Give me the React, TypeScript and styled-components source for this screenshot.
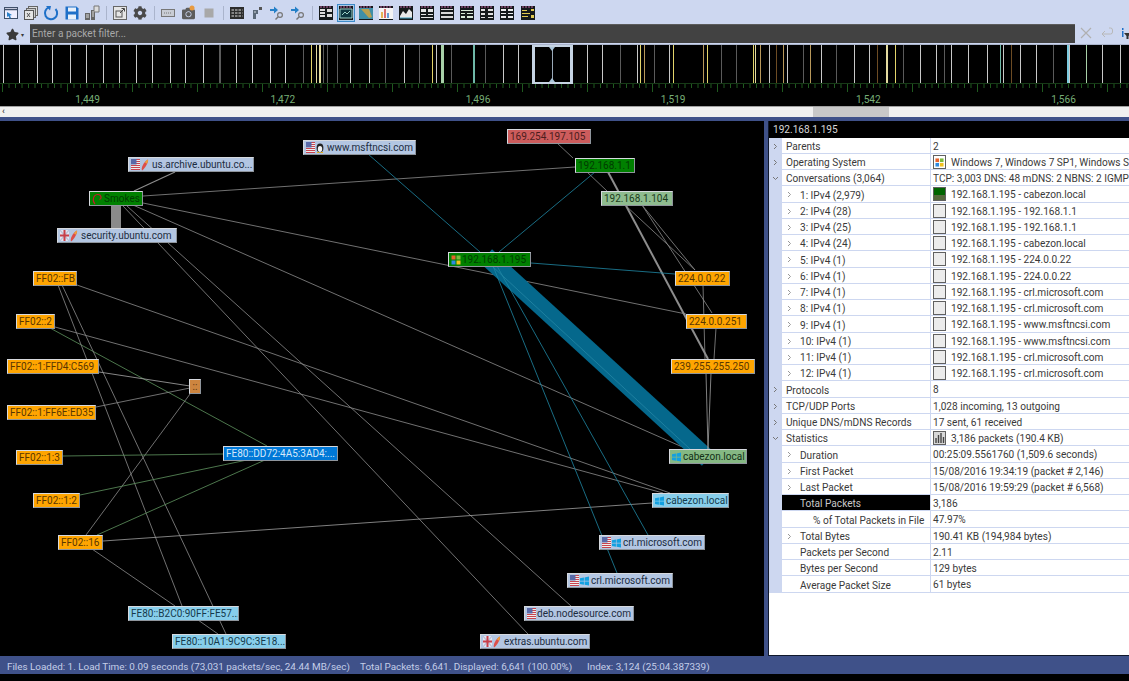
import React, {FC, ReactNode} from 'react';
import styled, {createGlobalStyle} from 'styled-components';
import {FaCog, FaCamera, FaStar} from 'react-icons/fa';

const GlobalStyle = createGlobalStyle`
	html, body {
		margin: 0;
		padding: 0;
		background: #000;
		overflow: hidden;
	}
	* {
		box-sizing: border-box;
	}
`;

const FONT = `Roboto, "Open Sans", "Liberation Sans", sans-serif`;
const TEXT_SIZE = '10.1px';

const Page = styled.div`
	width: 1129px;
	height: 681px;
	display: flex;
	flex-direction: column;
	background: #000;
	font-family: ${FONT};
	overflow: hidden;
`;

const Toolbar = styled.div`
	height: 24px;
	flex: none;
	display: flex;
	align-items: center;
	padding: 2px 0 0 1px;
	background: #cdd7f0;
`;

const ToolSlot = styled.div<{$active?: boolean}>`
	width: 20.2px;
	height: 20px;
	flex: none;
	display: flex;
	align-items: center;
	justify-content: center;
	color: #555;

	${({$active}) => $active && `
		& > svg {
			outline: 1px solid #3d8bc9;
			background: #a9cbe8;
		}
	`}
`;

const ToolSeparator = styled.div`
	width: 8px;
	height: 14px;
	flex: none;

	&::after {
		content: '';
		display: block;
		width: 1px;
		height: 100%;
		margin-left: 4px;
		background: #aab4cc;
	}
`;

const FilterBar = styled.div`
	height: 20px;
	flex: none;
	display: flex;
	align-items: center;
	background: #cdd7f0;
	color: #333;
`;

const StarButton = styled.div`
	width: 30px;
	height: 20px;
	flex: none;
	display: flex;
	align-items: center;
	justify-content: center;
	gap: 2px;
	padding-right: 1px;
	color: #3a3a3a;
	font-size: 6px;
`;

const FilterInput = styled.div`
	width: 1045px;
	height: 19px;
	flex: none;
	align-self: flex-start;
	padding: 0 2px 2px;
	display: flex;
	align-items: center;
	background: #424242;
	border-top: 1px solid #5b5b5b;
	color: #a8a8a8;
	font-size: ${TEXT_SIZE};
`;

const FilterActions = styled.div`
	flex: 1;
	display: flex;
	align-items: center;
	gap: 8px;
	padding: 0 0 2px 5px;
	overflow: hidden;
`;

const Timeline = styled.div`
	height: 62px;
	flex: none;
	position: relative;
	background: #000;
	border-top: 1px solid #aab4cc;
	display: flex;
	flex-direction: column;
`;

const TickStrip = styled.svg`
	display: block;
	width: 1129px;
	height: 48px;
	flex: none;
`;

const RulerLabels = styled.div`
	display: flex;
	margin-left: -10px;
	height: 13px;
`;

const RulerLabel = styled.div`
	width: 195.2px;
	flex: none;
	text-align: center;
	color: #76ad76;
	font-size: ${TEXT_SIZE};
	line-height: 13px;
`;

const Selection = styled.div`
	position: absolute;
	left: 532px;
	top: 0;
	width: 41px;
	height: 39px;
	border: 2px solid #c5d3e2;
	border-left-width: 3px;
	border-right-width: 3px;

	&::before {
		content: '';
		position: absolute;
		left: 17px;
		top: 0;
		bottom: 0;
		width: 1px;
		background: #9aa9b8;
	}
`;

const Handle = styled.div<{$bottom?: boolean}>`
	position: absolute;
	left: 14px;
	${({$bottom}) => $bottom ? 'bottom: 0;' : 'top: 0;'}
	width: 0;
	height: 0;
	border-left: 3.5px solid transparent;
	border-right: 3.5px solid transparent;
	${({$bottom}) => $bottom ? 'border-bottom: 4px solid #a9c4d8;' : 'border-top: 4px solid #a9c4d8;'}
`;

const ScrollTrack = styled.div`
	height: 11px;
	flex: none;
	position: relative;
	background: #f0f0f0;
	border-top: 1px solid #a0a0a0;
	color: #444;
	font-size: 9px;
	line-height: 9px;
	padding-left: 2px;
	font-weight: 700;
`;

const ScrollThumb = styled.div`
	position: absolute;
	left: 813px;
	top: 0;
	bottom: 0;
	width: 76px;
	background: #c8c8c8;
`;

const Main = styled.div`
	height: 539px;
	flex: none;
	display: flex;
	border-top: 4px solid #3f5189;
	background: #3f5189;
`;

const GraphCanvas = styled.div`
	width: 764px;
	flex: none;
	position: relative;
	background: #000;
	overflow: hidden;
`;

const EdgeLayer = styled.svg`
	position: absolute;
	left: 0;
	top: 0;
	width: 764px;
	height: 535px;
`;

const NODE_STYLES = {
	host: {bg: '#b3c6e2', fg: '#1c2c40'},
	local: {bg: '#008000', fg: '#003c00'},
	orange: {bg: '#ffa500', fg: '#5a3600'},
	red: {bg: '#cd5c5c', fg: '#4c1c1c'},
	pale: {bg: '#8fbc8f', fg: '#1c3c1c'},
	cabezon: {bg: '#85b883', fg: '#123016'},
	sky: {bg: '#87ceeb', fg: '#153a4c'},
	blue: {bg: '#0078d7', fg: '#d4e9fb'},
	peru: {bg: '#cd853f', fg: '#5a3410'},
};

type NodeKind = keyof typeof NODE_STYLES;

const GraphNode = styled.div<{$x: number; $y: number; $w: number; $kind: NodeKind}>`
	position: absolute;
	left: ${({$x}) => $x}px;
	top: ${({$y}) => $y - 121}px;
	width: ${({$w}) => $w}px;
	height: 15px;
	padding: 0 2px;
	display: flex;
	align-items: center;
	justify-content: ${({$kind}) => $kind === 'peru' ? 'center' : 'flex-start'};
	gap: 1px;
	overflow: hidden;
	white-space: nowrap;
	border: 1px solid #d6d9de;
	border-right-color: #8f959c;
	border-bottom-color: #8f959c;
	background: ${({$kind}) => NODE_STYLES[$kind].bg};
	color: ${({$kind}) => NODE_STYLES[$kind].fg};
	font-size: 10px;
	line-height: 13px;
`;

const Splitter = styled.div`
	width: 4px;
	flex: none;
	background: #3f5189;
`;

const Panel = styled.div`
	width: 361px;
	flex: none;
	height: 535px;
	background: #fff;
	border-left: 1px solid #10182c;
	border-bottom: 1px solid #10182c;
	display: flex;
	flex-direction: column;
	overflow: hidden;
`;

const PanelHeader = styled.div`
	height: 17px;
	flex: none;
	padding-left: 4px;
	background: #000;
	color: #d8d8d8;
	font-size: ${TEXT_SIZE};
	line-height: 18px;
`;

const PropertyList = styled.div`
	display: flex;
	flex-direction: column;
`;

const PropertyRow = styled.div`
	display: grid;
	grid-template-columns: 13px 149px 1fr;
	grid-template-rows: 1fr;
	height: 16px;
	flex: none;
	min-width: 0;
	font-size: ${TEXT_SIZE};
	line-height: 14px;
	color: #3a3a3a;

	&:nth-child(4n) {
		height: 17px;
	}
`;

const Gutter = styled.div`
	background: #cdd7f0;
	display: flex;
	align-items: center;
	justify-content: center;
	color: #777;
`;

const NameCell = styled.div<{$level: number; $selected?: boolean}>`
	display: flex;
	align-items: center;
	min-height: 0;
	padding: 3px 0 0 ${({$level}) => [4, 18, 31][$level]}px;
	position: relative;
	white-space: nowrap;
	border-bottom: 1px solid #cdd7f0;
	border-right: 1px solid #cdd7f0;
	background: ${({$selected}) => $selected ? '#000' : '#fff'};
	color: ${({$selected}) => $selected ? '#c8c8c8' : 'inherit'};
`;

const NameChevron = styled.span`
	position: absolute;
	left: 4px;
	top: 5px;
	display: flex;
	color: #999;
`;

const ValueCell = styled.div`
	display: flex;
	align-items: center;
	gap: 5px;
	min-height: 0;
	padding: 0 0 0 2px;
	min-width: 0;
	overflow: hidden;
	white-space: nowrap;
	border-bottom: 1px solid #cdd7f0;
`;

const ValueText = styled.span`
	padding-top: 2px;
`;

const Swatch = styled.span`
	width: 13px;
	height: 14px;
	flex: none;
	display: block;
	border: 1px solid #606060;
	background: #ececec;
	overflow: hidden;
`;

const StatusBar = styled.div`
	height: 18px;
	flex: none;
	display: flex;
	align-items: center;
	padding: 2px 0 0 7px;
	background: #3f5189;
	color: #c4cee8;
	font-size: 9.9px;
	white-space: nowrap;
`;

const StatusItem = styled.span<{$width: number}>`
	width: ${({$width}) => $width}px;
	flex: none;
`;

/* ---- drawings ---- */

const Chevron: FC<{down?: boolean}> = ({down}) =>
	<svg width="7" height="7" viewBox="0 0 7 7" fill="none" stroke="currentColor" strokeWidth="1">
		{down ? <path d="M1 2l2.5 2.5L6 2"/> : <path d="M2 1l2.5 2.5L2 6"/>}
	</svg>;

const UsFlag: FC = () =>
	<svg width="9" height="11" viewBox="0 0 9 11" style={{flex: 'none'}}>
		<rect width="9" height="11" fill="#eee"/>
		{[0, 2, 4, 6, 8, 10].map(y => <rect key={y} y={y} width="9" height="1" fill="#c8454f"/>)}
		<rect width="5.5" height="5.5" fill="#5a6aa8"/>
	</svg>;

const UkFlag: FC = () =>
	<svg width="9" height="11" viewBox="0 0 9 11" style={{flex: 'none'}}>
		<rect width="9" height="11" fill="#e4e6f0"/>
		<path d="M0 0l9 11M9 0L0 11" stroke="#b8c0d8" strokeWidth="1.2"/>
		<path d="M4.500 0v11M0 5.500h9" stroke="#c8404a" strokeWidth="2"/>
	</svg>;

const Slash: FC = () =>
	<svg width="8" height="12" viewBox="0 0 8 12" style={{flex: 'none', marginRight: 2}}>
		<path d="M7 0.500C7.800 3 4 9.500 1 11.500 -0.300 9 3 2.500 7 0.500z" fill="#dc4f4a"/>
		<path d="M7 0.500C7.400 1.800 6.600 3.400 5.800 4.800L3.900 3.200C4.900 2 5.900 1 7 0.500z" fill="#eda23c"/>
	</svg>;

const Tux: FC = () =>
	<svg width="8" height="11" viewBox="0 0 8 11" style={{flex: 'none', marginRight: 2}}>
		<ellipse cx="4" cy="6" rx="3.4" ry="4.4" fill="#222"/>
		<ellipse cx="4" cy="7" rx="2.2" ry="3" fill="#f2f2f2"/>
		<path d="M1 10.500h2.400M4.600 10.500H7" stroke="#e8b020" strokeWidth="1.2"/>
	</svg>;

const WinOld: FC<{size?: number}> = ({size = 10}) =>
	<svg width={size} height={size} viewBox="0 0 10 10" style={{flex: 'none'}}>
		<rect x="0.5" y="0.5" width="4" height="4" fill="#e8622c"/>
		<rect x="5.5" y="0.5" width="4" height="4" fill="#7cb83c"/>
		<rect x="0.5" y="5.5" width="4" height="4" fill="#2f8ae0"/>
		<rect x="5.5" y="5.5" width="4" height="4" fill="#f0c020"/>
	</svg>;

const WinNew: FC = () =>
	<svg width="9" height="10" viewBox="0 0 11 11" style={{flex: 'none', marginRight: 1}}>
		<path d="M0 2l4.800-.8v4H0zM5.600 1.100L11 0v5.200H5.600zM0 6h4.800v4L0 9.200zM5.600 6H11v5l-5.400-1z" fill="#12a0e0"/>
	</svg>;

const Swirl: FC = () =>
	<svg width="11" height="12" viewBox="0 0 11 12" fill="none" style={{flex: 'none'}}>
		<path d="M3 11C0 8 1 2 5.500 1.500 9.500 1.200 10 5.500 7.500 6.500" stroke="#c8182c" strokeWidth="1.1"/>
	</svg>;

const BarsIcon: FC = () =>
	<Swatch style={{background: '#d8d8d8'}}>
		<svg width="11" height="12" viewBox="0 0 11 12">
			<path d="M2 11V6M4.500 11V3M7 11V1M9.500 11V5" stroke="#444" strokeWidth="1.4"/>
		</svg>
	</Swatch>;

const FirstConversation: FC = () =>
	<Swatch>
		<svg width="11" height="12" viewBox="0 0 11 12" style={{display: 'block'}}>
			<rect width="11" height="7" fill="#006400"/>
			<rect y="7" width="11" height="5" fill="#56683c"/>
		</svg>
	</Swatch>;

const Ic = ({children}: {children: ReactNode}) =>
	<svg width="16" height="16" viewBox="0 0 16 16">{children}</svg>;

const TILE_CONTENT: ReactNode[] = [
	<path key="a" d="M2 4h5v2H2zM2 7h5v2H2zM2 10h5v2H2zM9 4h5v3H9zM9 9h5v3H9z" fill="#dcdcdc"/>,
	<path key="b" d="M2 4h12v9H2z M4 10l3-3 2 2 3-3" fill="#0c3540" stroke="#9ad0c8" strokeWidth="1"/>,
	<g key="c"><rect x="1" y="3" width="14" height="11" fill="#3f8fa8"/><path d="M3 4l8 9 3-1-3-8z" fill="#b8a050"/></g>,
	<g key="d"><rect x="1" y="3" width="14" height="11" fill="#f4f4f4"/><path d="M4 13V7" stroke="#e0a020" strokeWidth="1.5"/><path d="M7 13V4" stroke="#d04040" strokeWidth="1.5"/><path d="M10 13V8" stroke="#3080d0" strokeWidth="1.5"/></g>,
	<g key="e"><path d="M2 11l3-5 3 3 3-5 3 3v6H2z" fill="#e8e8e8"/><path d="M2 13h12" stroke="#40a0c0"/></g>,
	<path key="f" d="M2 4h5v3H2zM9 4h5v3H9zM2 9h5v1H2zM9 9h5v1H9zM2 12h12v1H2z" fill="#e4e4e4"/>,
	<path key="g" d="M2 4h12v1H2zM2 7h12v2H2zM2 11h12v2H2z" fill="#d8d8d8"/>,
	<path key="h" d="M2 5h12v1H2zM2 8h4v1H2zM8 8h6v1H8zM2 11h4v2H2zM8 11h6v2H8z" fill="#d8e8d8"/>,
	<path key="i" d="M2 4h4v2H2zM2 8h4v2H2zM2 12h4v1H2zM9 4h5v2H9zM9 8h5v2H9zM9 12h5v1H9z" fill="#e0e0e0"/>,
	<path key="j" d="M2 4h5v2H2zM9 4h5v2H9zM2 8h5v1H2zM9 8h5v1H9zM2 11h5v2H2zM9 11h5v2H9z" fill="#ececec"/>,
	<path key="k" d="M2 5h5v1H2zM2 8h8v1H2zM2 11h6v1H2zM11 4h3v2h-3zM11 10h3v3h-3z" fill="#e0c850"/>,
];

const ViewTile: FC<{index: number}> = ({index}) =>
	<Ic>
		<rect x="1" y="1" width="14" height="14" fill="#15191a"/>
		<path d="M2 2h2M5 2h2M8 2h2M11 2h2" stroke="#c060a0" strokeWidth="1"/>
		{TILE_CONTENT[index]}
	</Ic>;

const FindArrow: FC = () =>
	<Ic>
		<path d="M1 4h4V1.500L9 5 5 8.500V6H1z" fill="#2580c8"/>
		<circle cx="11" cy="10" r="2.400" fill="none" stroke="#777" strokeWidth="1.200"/>
		<path d="M9 12l-2.500 2.500" stroke="#777" strokeWidth="1.500"/>
	</Ic>;

const LEFT_TOOLS: ReactNode[][] = [
	[
		<Ic key="1"><rect x="1.500" y="2.500" width="13" height="11" fill="#eef" stroke="#40506a"/><path d="M1.500 4.500h13" stroke="#40506a" strokeWidth="1.500"/><path d="M4 7l5 3-2 .5 1 2.500-1.500.5-1-2.500L4 12z" fill="#2b80c8"/></Ic>,
		<Ic key="2"><rect x="5.500" y="1.500" width="9" height="9" fill="#ddd" stroke="#666"/><rect x="3.500" y="3.500" width="9" height="9" fill="#ccc" stroke="#666"/><rect x="1.500" y="5.500" width="9" height="9" fill="#e4e4e4" stroke="#555"/><path d="M4 8l3 4M7 8l-3 4" stroke="#555"/></Ic>,
		<Ic key="3"><path d="M6 2.400A6.100 6.100 0 1 0 12.500 4" fill="none" stroke="#1f70c8" strokeWidth="2"/><path d="M3 1l5 0-1 4.500z" fill="#1f70c8"/></Ic>,
		<Ic key="4"><path d="M1.500 1.500h11l2 2v11h-13z" fill="#1f70c8"/><rect x="4" y="2.500" width="8" height="4" fill="#e8f0fa"/><rect x="4" y="9.500" width="8" height="5" fill="#e8f0fa"/></Ic>,
		<Ic key="5"><path d="M1 8h5v7H1zM7 5h4v10H7z" fill="#666"/><path d="M10 1h5v6h-5z" fill="#ddd" stroke="#777"/><path d="M2 10h3M2 12h3M8 7h2M8 9h2M8 11h2" stroke="#ddd"/></Ic>,
	],
	[
		<Ic key="6"><rect x="1.500" y="1.500" width="13" height="13" fill="#e6e6e6" stroke="#666"/><rect x="4" y="6" width="6" height="6" fill="none" stroke="#555"/><path d="M8 8l4-4M9.500 3.500H12.500V6.500" stroke="#444" fill="none"/></Ic>,
		<FaCog key="7" size={14} color="#4a4a4a"/>,
	],
	[
		<Ic key="8"><rect x="1.500" y="4.500" width="13" height="7" fill="#c8ccd4" stroke="#777"/><path d="M4 8h8" stroke="#777" strokeDasharray="1 1"/></Ic>,
		<span key="9" style={{position: 'relative', display: 'flex'}}><FaCamera size={13} color="#5c5c5c"/><svg width="6" height="6" viewBox="0 0 6 6" style={{position: 'absolute', right: 0, top: -2}}><circle cx="3" cy="3" r="2.500" fill="#e89a40"/></svg></span>,
		<Ic key="10"><rect x="3.500" y="3.500" width="9" height="9" fill="#a8a8a8"/></Ic>,
	],
	[
		<Ic key="11"><rect x="1" y="2" width="14" height="12" fill="#2c2c2c"/><path d="M2.500 5h11M2.500 8h11M2.500 11h11" stroke="#ddd" strokeDasharray="2.500 1"/></Ic>,
		<Ic key="12"><path d="M4 5h5v4H7v5H4z" fill="#5a6878"/><path d="M10 2h3v3h-3z" fill="#555"/><path d="M5 7h2" stroke="#d0d8e0"/></Ic>,
		<FindArrow key="13"/>,
		<FindArrow key="14"/>,
	],
];

/* ---- timeline data ---- */

const W = '#c8c8c8';
const D = '#5a5a5a';
const Y = '#e2d36a';
const P = '#e4dba0';
const G = '#a8d0a8';
const T = '#6fb8a8';
const B = '#6d4c24';
const O = '#b8985a';
const C = '#7ccbe0';

const TICKS: [number, string, number?][] = [
	[3, W], [19, W], [37, W], [52, W], [70, W], [86, W], [103, W], [119, W], [136, W], [152, W], [170, W],
	[185, W], [203, W], [219, D, 2], [236, W], [252, W], [270, W], [285, W], [303, D], [311, Y], [316, P],
	[319, P, 2], [323, D], [327, D], [337, D], [350, W], [369, W], [385, D], [404, W], [419, D], [432, Y],
	[436, W], [441, G, 3], [451, D], [473, T, 2], [485, D], [503, W], [518, W],
	[587, W], [602, W], [620, D], [637, W], [640, Y], [644, O], [654, D], [669, W], [673, Y], [703, O],
	[707, Y], [721, D], [736, D], [753, Y], [755, P], [760, O], [769, W], [776, B], [783, O], [787, W],
	[803, D], [810, O], [821, W], [836, D], [854, W], [869, W], [877, B], [886, P, 2], [895, Y], [903, D],
	[920, W], [936, W], [944, D], [951, W], [968, W], [987, W], [1000, T], [1003, W], [1011, B], [1020, W],
	[1036, W], [1053, D], [1067, C, 2], [1069, W], [1086, G], [1102, W], [1120, W],
];

const RULER = Array.from({length: 176}, (_, i) => i * 6.5 + 2);

/* ---- graph data ---- */

type Edge = [number, number, number, number, string?, number?];

const GRAY = '#8d8d8d';
const TEAL = '#2088a4';
const GREEN = '#5f945f';

const EDGES: Edge[] = [
	[175, 172, 134, 191, GRAY, 1.2],
	[116, 205, 116, 228, '#8a8a8a', 10],
	[143, 196, 575, 167, GRAY],
	[143, 203, 686, 314, GRAY],
	[133, 205, 687, 449, GRAY],
	[127, 206, 571, 606, GRAY],
	[123, 206, 528, 634, GRAY],
	[77, 285, 670, 493, GRAY],
	[55, 327, 663, 493, GRAY],
	[50, 328, 267, 446, GREEN],
	[58, 285, 182, 606, GRAY],
	[62, 285, 226, 634, GRAY],
	[99, 372, 190, 386, '#a8a8a8'],
	[190, 388, 96, 407, GRAY],
	[190, 394, 86, 535, GRAY],
	[63, 456, 223, 454, GREEN],
	[80, 495, 247, 460, GREEN],
	[97, 535, 265, 460, GREEN],
	[103, 541, 652, 503, '#a0a0a0'],
	[92, 549, 175, 606, GRAY],
	[198, 620, 218, 634, GRAY],
	[368, 154, 480, 252, TEAL],
	[595, 172, 499, 252, TEAL],
	[557, 143, 573, 158, GRAY],
	[587, 172, 607, 191, GRAY],
	[608, 172, 708, 359, '#8d8d8d', 2],
	[625, 205, 695, 270, GRAY],
	[642, 205, 695, 270, GRAY],
	[642, 205, 712, 313, GRAY],
	[531, 263, 675, 274, TEAL],
	[703, 285, 705, 359, GRAY],
	[716, 328, 714, 359, GRAY],
	[486, 256, 708, 459, '#05688c', 18],
	[492, 266, 690, 449, '#2587a6', 0.8],
	[706, 373, 708, 449, '#a0a0a0'],
	[711, 373, 708, 449, '#a0a0a0'],
	[493, 266, 617, 573, TEAL],
	[497, 266, 648, 535, TEAL],
];

type NodeDef = {
	x: number;
	y: number;
	w: number;
	kind: NodeKind;
	label: string;
	icons?: ReactNode;
};

const NODES: NodeDef[] = [
	{x: 128, y: 157, w: 126, kind: 'host', label: 'us.archive.ubuntu.co...', icons: <><UsFlag/><Slash/></>},
	{x: 89, y: 191, w: 54, kind: 'local', label: 'Smokes', icons: <Swirl/>},
	{x: 57, y: 228, w: 120, kind: 'host', label: 'security.ubuntu.com', icons: <><UkFlag/><Slash/></>},
	{x: 303, y: 140, w: 113, kind: 'host', label: 'www.msftncsi.com', icons: <><UsFlag/><Tux/></>},
	{x: 33, y: 271, w: 44, kind: 'orange', label: 'FF02::FB'},
	{x: 16, y: 314, w: 39, kind: 'orange', label: 'FF02::2'},
	{x: 7, y: 359, w: 92, kind: 'orange', label: 'FF02::1:FFD4:C569'},
	{x: 189, y: 379, w: 12, kind: 'peru', label: '::'},
	{x: 7, y: 405, w: 89, kind: 'orange', label: 'FF02::1:FF6E:ED35'},
	{x: 16, y: 450, w: 47, kind: 'orange', label: 'FF02::1:3'},
	{x: 223, y: 446, w: 115, kind: 'blue', label: 'FE80::DD72:4A5:3AD4:...'},
	{x: 33, y: 493, w: 47, kind: 'orange', label: 'FF02::1:2'},
	{x: 58, y: 535, w: 45, kind: 'orange', label: 'FF02::16'},
	{x: 128, y: 606, w: 111, kind: 'sky', label: 'FE80::B2C0:90FF:FE57...'},
	{x: 172, y: 634, w: 114, kind: 'sky', label: 'FE80::10A1:9C9C:3E18...'},
	{x: 507, y: 129, w: 84, kind: 'red', label: '169.254.197.105'},
	{x: 575, y: 158, w: 60, kind: 'local', label: '192.168.1.1'},
	{x: 601, y: 191, w: 72, kind: 'pale', label: '192.168.1.104'},
	{x: 448, y: 252, w: 83, kind: 'local', label: '192.168.1.195', icons: <WinOld/>},
	{x: 675, y: 271, w: 55, kind: 'orange', label: '224.0.0.22'},
	{x: 686, y: 314, w: 61, kind: 'orange', label: '224.0.0.251'},
	{x: 671, y: 359, w: 84, kind: 'orange', label: '239.255.255.250'},
	{x: 669, y: 449, w: 78, kind: 'cabezon', label: 'cabezon.local', icons: <WinNew/>},
	{x: 652, y: 493, w: 77, kind: 'sky', label: 'cabezon.local', icons: <WinNew/>},
	{x: 599, y: 535, w: 106, kind: 'host', label: 'crl.microsoft.com', icons: <><UsFlag/><WinNew/></>},
	{x: 567, y: 573, w: 106, kind: 'host', label: 'crl.microsoft.com', icons: <><UsFlag/><WinNew/></>},
	{x: 524, y: 606, w: 110, kind: 'host', label: 'deb.nodesource.com', icons: <UsFlag/>},
	{x: 480, y: 634, w: 110, kind: 'host', label: 'extras.ubuntu.com', icons: <><UkFlag/><Slash/></>},
];

/* ---- property data ---- */

type Row = {
	name: string;
	level?: number;
	chevron?: 'right' | 'down';
	value: string;
	icon?: ReactNode;
	selected?: boolean;
};

const conv = (n: number, count: string, peer: string, first?: boolean): Row => ({
	name: `${n}: IPv4 (${count})`,
	level: 1,
	chevron: 'right',
	value: `192.168.1.195 - ${peer}`,
	icon: first ? <FirstConversation/> : <Swatch/>,
});

const ROWS: Row[] = [
	{name: 'Parents', chevron: 'right', value: '2'},
	{name: 'Operating System', chevron: 'right', value: 'Windows 7, Windows 7 SP1, Windows S', icon: <Swatch style={{background: '#fff', padding: 1}}><WinOld size={9}/></Swatch>},
	{name: 'Conversations (3,064)', chevron: 'down', value: 'TCP: 3,003 DNS: 48 mDNS: 2 NBNS: 2 IGMP'},
	conv(1, '2,979', 'cabezon.local', true),
	conv(2, '28', '192.168.1.1'),
	conv(3, '25', '192.168.1.1'),
	conv(4, '24', 'cabezon.local'),
	conv(5, '1', '224.0.0.22'),
	conv(6, '1', '224.0.0.22'),
	conv(7, '1', 'crl.microsoft.com'),
	conv(8, '1', 'crl.microsoft.com'),
	conv(9, '1', 'www.msftncsi.com'),
	conv(10, '1', 'www.msftncsi.com'),
	conv(11, '1', 'crl.microsoft.com'),
	conv(12, '1', 'crl.microsoft.com'),
	{name: 'Protocols', chevron: 'right', value: '8'},
	{name: 'TCP/UDP Ports', chevron: 'right', value: '1,028 incoming, 13 outgoing'},
	{name: 'Unique DNS/mDNS Records', chevron: 'right', value: '17 sent, 61 received'},
	{name: 'Statistics', chevron: 'down', value: '3,186 packets (190.4 KB)', icon: <BarsIcon/>},
	{name: 'Duration', level: 1, chevron: 'right', value: '00:25:09.5561760 (1,509.6 seconds)'},
	{name: 'First Packet', level: 1, chevron: 'right', value: '15/08/2016 19:34:19 (packet # 2,146)'},
	{name: 'Last Packet', level: 1, chevron: 'right', value: '15/08/2016 19:59:29 (packet # 6,568)'},
	{name: 'Total Packets', level: 1, value: '3,186', selected: true},
	{name: '% of Total Packets in File', level: 2, value: '47.97%'},
	{name: 'Total Bytes', level: 1, chevron: 'right', value: '190.41 KB (194,984 bytes)'},
	{name: 'Packets per Second', level: 1, value: '2.11'},
	{name: 'Bytes per Second', level: 1, value: '129 bytes'},
	{name: 'Average Packet Size', level: 1, value: '61 bytes'},
];

const App: FC = () =>
	<Page>
		<GlobalStyle/>
		<Toolbar>
			{LEFT_TOOLS.map((group, i) =>
				<React.Fragment key={i}>
					{group.map((tool, j) => <ToolSlot key={j}>{tool}</ToolSlot>)}
					<ToolSeparator/>
				</React.Fragment>
			)}
			{TILE_CONTENT.map((_, i) =>
				<ToolSlot key={i} $active={i === 1}><ViewTile index={i}/></ToolSlot>
			)}
		</Toolbar>
		<FilterBar>
			<StarButton><FaStar size={13}/>▾</StarButton>
			<FilterInput>Enter a packet filter...</FilterInput>
			<FilterActions>
				<svg width="12" height="12" viewBox="0 0 12 12" style={{flex: 'none'}}>
					<path d="M1 1l10 10M11 1L1 11" stroke="#b0b0b0" strokeWidth="1.2"/>
				</svg>
				<svg width="13" height="12" viewBox="0 0 13 12" fill="none" style={{flex: 'none'}}>
					<path d="M9 1h1.500a2 2 0 0 1 2 2v2a2 2 0 0 1-2 2H2M5 4L2 7l3 3" stroke="#b8b8b8"/>
				</svg>
				<svg width="10" height="14" viewBox="0 0 10 14" style={{flex: 'none'}}>
					<path d="M1 2h1.500v2H1zM1 5h1.500v6H1z" fill="#1f70c8"/>
					<path d="M3 7h7L7.500 10v3H5.500v-3z" fill="#333"/>
				</svg>
			</FilterActions>
		</FilterBar>
		<Timeline>
			<TickStrip viewBox="0 0 1129 48">
				{TICKS.map(([x, color, width], i) =>
					<rect key={i} x={x} y={0} width={width ?? 1} height={38} fill={color}/>
				)}
				<rect x="0" y="38" width="1129" height="1" fill="#173a17"/>
				{RULER.map((x, i) =>
					<rect key={i} x={x} y={39} width={1} height={i % 10 === 0 ? 8 : 4} fill="#1f5a1f"/>
				)}
			</TickStrip>
			<RulerLabels>
				{['1,449', '1,472', '1,496', '1,519', '1,542', '1,566'].map(label =>
					<RulerLabel key={label}>{label}</RulerLabel>
				)}
			</RulerLabels>
			<Selection>
				<Handle/>
				<Handle $bottom/>
			</Selection>
		</Timeline>
		<ScrollTrack>
			‹
			<ScrollThumb/>
		</ScrollTrack>
		<Main>
			<GraphCanvas>
				<EdgeLayer viewBox="0 121 764 535">
					{EDGES.map(([x1, y1, x2, y2, color, width], i) =>
						<line key={i} x1={x1} y1={y1} x2={x2} y2={y2} stroke={color ?? GRAY} strokeWidth={width ?? 0.8}/>
					)}
				</EdgeLayer>
				{NODES.map((node, i) =>
					<GraphNode key={i} $x={node.x} $y={node.y} $w={node.w} $kind={node.kind}>
						{node.icons}
						<span>{node.label}</span>
					</GraphNode>
				)}
			</GraphCanvas>
			<Splitter/>
			<Panel>
				<PanelHeader>192.168.1.195</PanelHeader>
				<PropertyList>
					{ROWS.map(row => {
						const level = row.level ?? 0;
						return (
							<PropertyRow key={row.name}>
								<Gutter>
									{level === 0 && row.chevron && <Chevron down={row.chevron === 'down'}/>}
								</Gutter>
								<NameCell $level={level} $selected={row.selected}>
									{level > 0 && row.chevron && <NameChevron><Chevron/></NameChevron>}
									{row.name}
								</NameCell>
								<ValueCell>
									{row.icon}
									<ValueText>{row.value}</ValueText>
								</ValueCell>
							</PropertyRow>
						);
					})}
				</PropertyList>
			</Panel>
		</Main>
		<StatusBar>
			<StatusItem $width={353}>Files Loaded: 1. Load Time: 0.09 seconds (73,031 packets/sec, 24.44 MB/sec)</StatusItem>
			<StatusItem $width={227}>Total Packets: 6,641. Displayed: 6,641 (100.00%)</StatusItem>
			<StatusItem $width={200}>Index: 3,124 (25:04.387339)</StatusItem>
		</StatusBar>
	</Page>;

export default App;
